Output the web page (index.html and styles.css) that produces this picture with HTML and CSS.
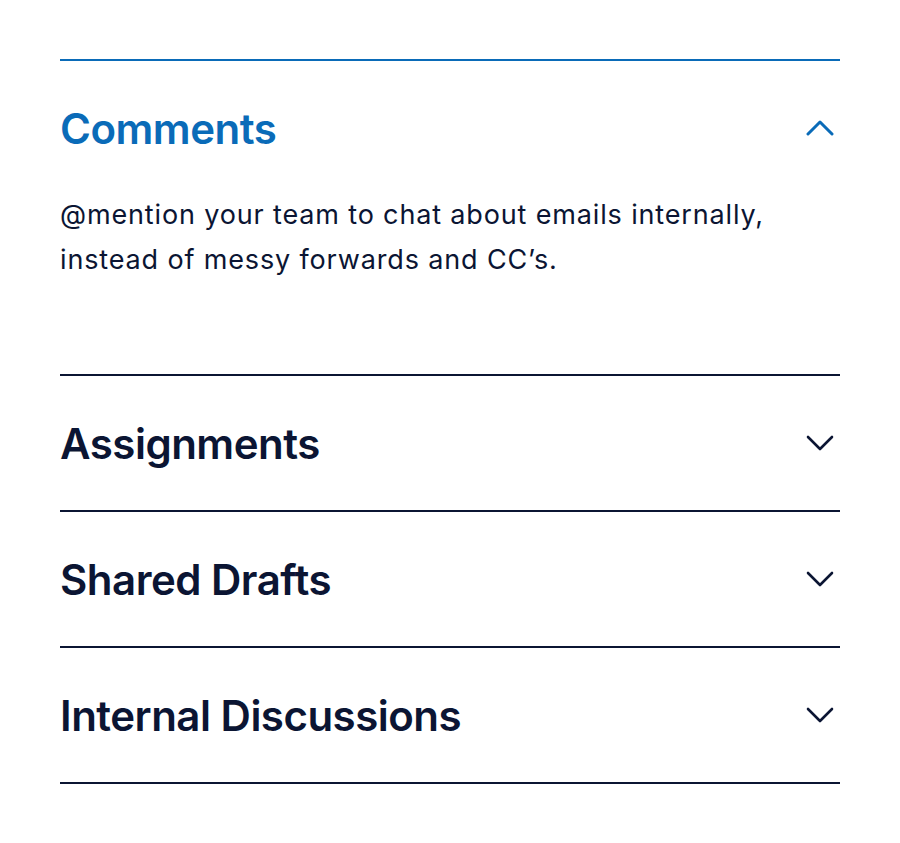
FILE: index.html
```html
<!DOCTYPE html>
<html lang="en">
<head>
<meta charset="utf-8">
<link rel="stylesheet" href="styles.css">
</head>
<body>
<div class="accordion">
  <section class="item open">
    <div class="head">
      <h3 class="title">Comments</h3>
      <svg class="chev" width="28" height="16" viewBox="0 0 28 16"><path d="M2 14 L14 2 L26 14" fill="none" stroke="currentColor" stroke-width="3" stroke-linecap="round" stroke-linejoin="round"/></svg>
    </div>
    <p class="body">@mention your team to chat about emails internally,<br>instead of messy forwards and CC’s.</p>
  </section>
  <section class="item">
    <div class="head">
      <h3 class="title">Assignments</h3>
      <svg class="chev" width="28" height="16" viewBox="0 0 28 16"><path d="M2 2 L14 14 L26 2" fill="none" stroke="currentColor" stroke-width="2.6" stroke-linecap="round" stroke-linejoin="round"/></svg>
    </div>
  </section>
  <section class="item">
    <div class="head">
      <h3 class="title">Shared Drafts</h3>
      <svg class="chev" width="28" height="16" viewBox="0 0 28 16"><path d="M2 2 L14 14 L26 2" fill="none" stroke="currentColor" stroke-width="2.6" stroke-linecap="round" stroke-linejoin="round"/></svg>
    </div>
  </section>
  <section class="item last">
    <div class="head">
      <h3 class="title">Internal Discussions</h3>
      <svg class="chev" width="28" height="16" viewBox="0 0 28 16"><path d="M2 2 L14 14 L26 2" fill="none" stroke="currentColor" stroke-width="2.6" stroke-linecap="round" stroke-linejoin="round"/></svg>
    </div>
  </section>
</div>
</body>
</html>
```
FILE: styles.css
```css
html, body {
  margin: 0;
  padding: 0;
  background: #ffffff;
}
body {
  font-family: Inter, "Liberation Sans", sans-serif;
  color: #0b1533;
}
.accordion {
  padding: 59px 60px 0 60px;
}
.item {
  border-top: 2px solid #0b1533;
}
.item.open {
  border-top-color: #0a6bb8;
}
.item.last {
  border-bottom: 2px solid #0b1533;
}
.head {
  height: 134px;
  display: flex;
  align-items: center;
  justify-content: space-between;
  padding-right: 6px;
}
.title {
  margin: 0;
  font-size: 42px;
  font-weight: 600;
  letter-spacing: -0.5px;
  color: #0b1533;
}
.open .title {
  color: #0a6bb8;
}
.chev {
  color: #0b1533;
  display: block;
}
.open .chev {
  color: #0a6bb8;
}
.body {
  margin: -3px 0 0 0;
  padding-bottom: 92px;
  font-size: 27px;
  line-height: 45px;
  font-weight: 400;
  letter-spacing: 0.85px;
}
```
